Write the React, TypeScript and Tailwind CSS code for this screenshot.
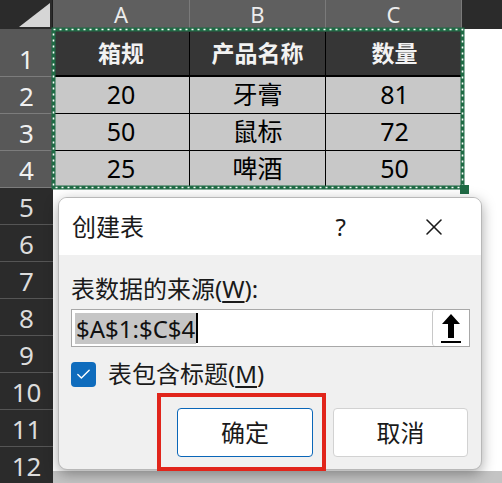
import { Check, X } from 'lucide-react';

const font = "font-['Noto_Sans','Noto_Sans_CJK_SC',sans-serif]";

const rows = [
  { n: '1', h: 'h-[48px]', hi: true },
  { n: '2', h: 'h-[37px]', hi: true },
  { n: '3', h: 'h-[37px]', hi: true },
  { n: '4', h: 'h-[37px]', hi: true },
  { n: '5', h: 'h-[37px]', hi: false },
  { n: '6', h: 'h-[37px]', hi: false },
  { n: '7', h: 'h-[37px]', hi: false },
  { n: '8', h: 'h-[37px]', hi: false },
  { n: '9', h: 'h-[37px]', hi: false },
  { n: '10', h: 'h-[37px]', hi: false },
  { n: '11', h: 'h-[37px]', hi: false },
  { n: '12', h: 'h-[37px]', hi: false },
];

const data = [
  ['20', '牙膏', '81'],
  ['50', '鼠标', '72'],
  ['25', '啤酒', '50'],
];

export default function App() {
  return (
    <div className={`relative h-[483px] w-[502px] overflow-hidden bg-white ${font}`}>
      {/* column headers */}
      <div className="flex h-[29px] bg-[#2b2b2b]">
        <div className="relative w-[53px] shrink-0 border-r border-[#1e1e1e]">
          <svg className="absolute left-[19px] top-[3px]" width="31" height="24" viewBox="0 0 31 24">
            <polygon points="31,0 31,24 0,24" fill="#d6d6d6" />
          </svg>
        </div>
        {['A', 'B', 'C'].map((c, i) => (
          <div
            key={c}
            className={`flex items-center justify-center border-r border-[#7a7a7a] bg-[#5f5f5f] text-[22px] leading-[29px] text-[#ececec] ${i === 0 ? 'w-[137px]' : 'w-[136px]'}`}
          >
            {c}
          </div>
        ))}
        <div className="flex-1" />
      </div>

      <div className="flex h-[454px]">
        {/* row headers */}
        <div className="w-[53px] shrink-0">
          {rows.map((r) => (
            <div
              key={r.n}
              className={`flex items-end justify-center border-b pb-[4px] text-[26px] leading-none ${r.h} ${
                r.hi ? 'border-[#7c7c7c] bg-[#585858] text-[#f0f0f0]' : 'border-[#555] bg-[#2b2b2b] text-[#dcdcdc]'
              }`}
            >
              {r.n}
            </div>
          ))}
        </div>

        {/* cells */}
        <div className="flex flex-1 flex-col">
          <div className="relative w-[410px]">
            <div className="flex h-[48px] border-b-2 border-black bg-[#363636] pt-[3px] text-[23px] font-bold text-[#f2f2f2]">
              <div className="flex w-[137px] items-center justify-center border-r border-black">箱规</div>
              <div className="flex w-[136px] items-center justify-center border-r border-black">产品名称</div>
              <div className="flex flex-1 items-center justify-center">数量</div>
            </div>
            {data.map((row, i) => (
              <div key={i} className="flex h-[37px] border-b border-black bg-[#c8c8c8] text-[25px] text-black">
                <div className="flex w-[137px] items-center justify-center border-r border-black">{row[0]}</div>
                <div className="flex w-[136px] items-center justify-center border-r border-black">{row[1]}</div>
                <div className="flex flex-1 items-center justify-center">{row[2]}</div>
              </div>
            ))}
            {/* selection marquee */}
            <svg className="pointer-events-none absolute left-[-2px] top-[-2px]" width="415" height="164" viewBox="0 0 415 164">
              <rect x="2.5" y="2.5" width="409" height="158" fill="none" stroke="#1f6b45" strokeWidth="4" />
              <rect x="2.5" y="2.5" width="409" height="158" fill="none" stroke="#ffffff" strokeWidth="1.6" strokeDasharray="2 4" />
            </svg>
            <div className="absolute bottom-[-6px] right-[-6px] h-[9px] w-[9px] bg-[#1f6b45]" />
          </div>
          <div className="flex-1" />
          <div className="h-[12px] bg-[#c4c4c4]" />
        </div>
      </div>

      {/* dialog */}
      <div className="absolute left-[58px] top-[197px] flex h-[273px] w-[424px] flex-col overflow-hidden rounded-[9px] border border-[#b8b8b8] bg-[#f0f0f0] shadow-[0_4px_14px_rgba(0,0,0,0.35)]">
        <div className="flex h-[57px] items-center bg-white pl-[13px] pr-[33px] text-[24px] text-[#1a1a1a]">
          <span className="flex-1">创建表</span>
          <span className="mr-[74px] text-[24px]">?</span>
          <X className="h-[28px] w-[28px]" strokeWidth={1.3} />
        </div>
        <div className="flex flex-1 flex-col px-[12px]">
          <div className="mt-[18px] text-[24px] leading-[32px] text-[#1a1a1a]">
            表数据的来源(<span className="underline underline-offset-[3px]">W</span>):
          </div>
          <div className="mt-[4px] flex h-[38px] w-[399px] border border-[#a8a8a8] bg-white">
            <div className="flex flex-1 items-center pl-[3px]">
              <span className="bg-[#c6c6c6] px-[1px] text-[24px] leading-[31px] text-[#111]">$A$1:$C$4</span>
              <span className="h-[30px] w-[2px] bg-black" />
            </div>
            <div className="flex w-[37px] items-center justify-center rounded-[3px] border-l border-[#c8c8c8] bg-white">
              <svg width="22" height="32" viewBox="0 0 22 32">
                <path d="M11 2 L20 12 L14 12 L14 26 L8 26 L8 12 L2 12 Z" fill="#000" />
                <rect x="1" y="29" width="20" height="2" fill="#000" />
              </svg>
            </div>
          </div>
          <div className="mt-[12px] flex items-center">
            <div className="flex h-[25px] w-[25px] items-center justify-center rounded-[4px] bg-[#0f6cbd]">
              <Check className="h-[17px] w-[17px] text-white" strokeWidth={2} />
            </div>
            <span className="ml-[12px] text-[24px] leading-[30px] text-[#1a1a1a]">
              表包含标题(<span className="underline underline-offset-[3px]">M</span>)
            </span>
          </div>
          <div className="mt-[19px] flex justify-end gap-[20px] pr-[1px]">
            <button className="flex h-[49px] w-[136px] items-center justify-center rounded-[4px] border border-[#0a66b8] bg-white text-[24px] text-[#1a1a1a]">
              确定
            </button>
            <button className="flex h-[49px] w-[135px] items-center justify-center rounded-[4px] border border-[#d2d2d2] bg-white text-[24px] text-[#1a1a1a]">
              取消
            </button>
          </div>
        </div>
      </div>

      {/* red highlight annotation */}
      <div className="pointer-events-none absolute left-[157px] top-[393px] h-[78px] w-[169px] border-[4px] border-[#e1251b]" />
    </div>
  );
}
